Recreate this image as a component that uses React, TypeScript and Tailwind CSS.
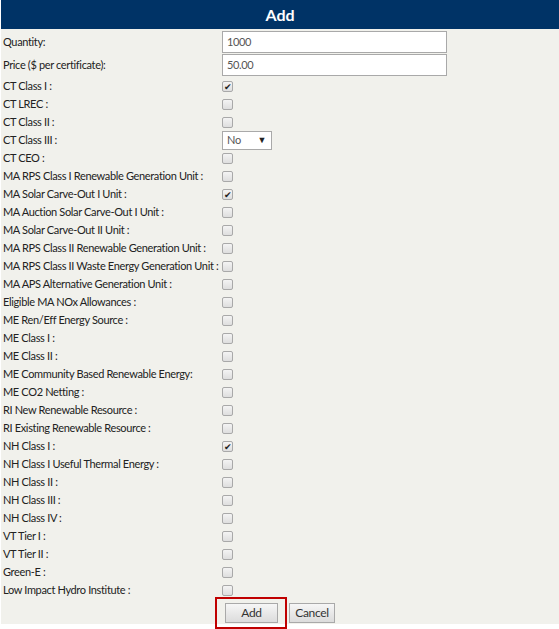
import React from "react";

type Row = { label: string; kind: "check" | "select"; checked?: boolean };

const rows: Row[] = [
  { label: "CT Class I :", kind: "check", checked: true },
  { label: "CT LREC :", kind: "check" },
  { label: "CT Class II :", kind: "check" },
  { label: "CT Class III :", kind: "select" },
  { label: "CT CEO :", kind: "check" },
  { label: "MA RPS Class I Renewable Generation Unit :", kind: "check" },
  { label: "MA Solar Carve-Out I Unit :", kind: "check", checked: true },
  { label: "MA Auction Solar Carve-Out I Unit :", kind: "check" },
  { label: "MA Solar Carve-Out II Unit :", kind: "check" },
  { label: "MA RPS Class II Renewable Generation Unit :", kind: "check" },
  { label: "MA RPS Class II Waste Energy Generation Unit :", kind: "check" },
  { label: "MA APS Alternative Generation Unit :", kind: "check" },
  { label: "Eligible MA NOx Allowances :", kind: "check" },
  { label: "ME Ren/Eff Energy Source :", kind: "check" },
  { label: "ME Class I :", kind: "check" },
  { label: "ME Class II :", kind: "check" },
  { label: "ME Community Based Renewable Energy:", kind: "check" },
  { label: "ME CO2 Netting :", kind: "check" },
  { label: "RI New Renewable Resource :", kind: "check" },
  { label: "RI Existing Renewable Resource :", kind: "check" },
  { label: "NH Class I :", kind: "check", checked: true },
  { label: "NH Class I Useful Thermal Energy :", kind: "check" },
  { label: "NH Class II :", kind: "check" },
  { label: "NH Class III :", kind: "check" },
  { label: "NH Class IV :", kind: "check" },
  { label: "VT Tier I :", kind: "check" },
  { label: "VT Tier II :", kind: "check" },
  { label: "Green-E :", kind: "check" },
  { label: "Low Impact Hydro Institute :", kind: "check" },
];

function Checkbox({ checked }: { checked?: boolean }) {
  return (
    <span className="flex h-[11px] w-[11px] items-center justify-center rounded-[2px] border border-[#a9a9a9] bg-gradient-to-b from-[#f4f4f4] to-[#dedede] text-[9px] leading-none text-[#222]">
      {checked ? "✔" : ""}
    </span>
  );
}

export default function App() {
  return (
    <div className="min-h-[629px] bg-white font-['Lato',sans-serif] text-[11px] tracking-[-0.35px] text-[#222]">
      <div className="ml-px bg-[#f1f1ec] pb-px">
        <div className="flex h-[29px] items-center justify-center bg-[#003366] text-[16px] font-bold tracking-normal text-white">
          Add
        </div>
        <div className="mt-[2px] grid grid-cols-[221px_1fr]">
          <div className="flex h-[22px] items-center pl-[2px]">Quantity:</div>
          <div className="flex h-[22px] items-center">
            <div className="flex h-[22px] w-[225px] items-center border border-[#a9a9a9] bg-white px-[4px] text-[#555]">1000</div>
          </div>
          <div className="mt-px flex h-[22px] items-center pl-[2px]">Price ($ per certificate):</div>
          <div className="mt-px flex h-[22px] items-center">
            <div className="flex h-[22px] w-[225px] items-center border border-[#a9a9a9] bg-white px-[4px] text-[#555]">50.00</div>
          </div>
        </div>
        <div className="mt-px grid grid-cols-[221px_1fr]">
          {rows.map((r) => (
            <React.Fragment key={r.label}>
              <div className="flex h-[18px] items-center whitespace-nowrap pl-[2px]">{r.label}</div>
              <div className="flex h-[18px] items-center">
                {r.kind === "check" ? (
                  <Checkbox checked={r.checked} />
                ) : (
                  <div className="flex h-[19px] w-[50px] items-center justify-between border border-[#a9a9a9] bg-white pl-[4px] pr-[5px] text-[#555]">
                    <span>No</span>
                    <span className="text-[9px] text-[#222]">▼</span>
                  </div>
                )}
              </div>
            </React.Fragment>
          ))}
        </div>
        <div className="mt-[4px] flex h-[20px] gap-[11px] pl-[224px]">
          <div className="relative">
            <button className="h-[20px] w-[53px] border border-[#a9a9a9] bg-gradient-to-b from-[#f6f6f6] to-[#dcdcdc] text-[12px] text-[#333]">
              Add
            </button>
            <span className="absolute -bottom-[6px] -left-[10px] -right-[9px] -top-[6px] border-2 border-[#c00000]" />
          </div>
          <button className="h-[20px] w-[46px] border border-[#a9a9a9] bg-gradient-to-b from-[#f6f6f6] to-[#dcdcdc] text-[12px] text-[#333]">
            Cancel
          </button>
        </div>
      </div>
    </div>
  );
}
